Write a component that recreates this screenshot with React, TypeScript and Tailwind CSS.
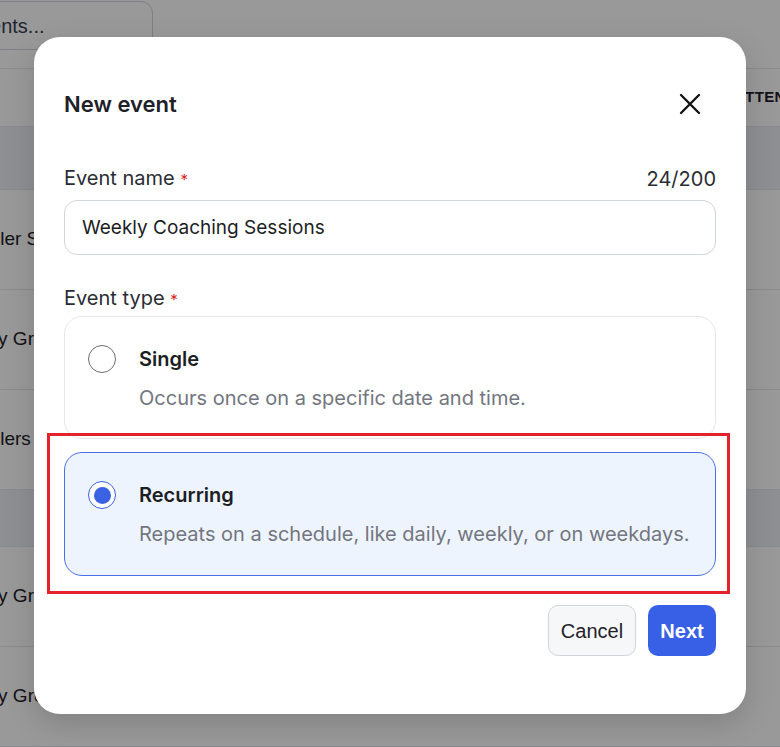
import { useState } from "react";

const rows = [
  { kind: "band", name: "", n: "" },
  { kind: "row", name: "Toddler Swim", n: "" },
  { kind: "row", name: "Study Group", n: "" },
  { kind: "row", name: "Toddlers", n: "" },
  { kind: "band", name: "", n: "" },
  { kind: "row", name: "Study Group", n: "" },
  { kind: "row", name: "Study Group", n: "667" },
];

function Background() {
  return (
    <div className="min-h-screen overflow-hidden bg-white font-['Liberation_Sans',Arial,sans-serif] text-[#1f2128]">
      <div className="pt-[1px]">
        <div className="-ml-[120px] flex h-[49px] w-[273px] items-center rounded-xl border border-gray-300 pl-[19px] text-[20px] text-gray-700">
          Search events...
        </div>
      </div>
      <div className="mt-[18px] border-t border-gray-200">
        <div className="flex h-[58px] items-center border-b border-gray-200 bg-white pl-[735px]">
          <span className="whitespace-nowrap text-[15px] font-bold uppercase tracking-wide">Attendance</span>
        </div>
        {rows.map((r, i) =>
          r.kind === "band" ? (
            <div
              key={i}
              className={`border-b border-gray-200 bg-[#eceef3] ${i === 0 ? "h-[63px]" : "h-[57px]"}`}
            />
          ) : (
            <div key={i} className="flex h-[100px] items-center border-b border-gray-200">
              <span className="-ml-[41px] w-[300px] shrink-0 whitespace-nowrap text-[19px]">{r.name}</span>
              <span className="ml-[82px] text-[20px]">{r.n}</span>
            </div>
          )
        )}
      </div>
    </div>
  );
}

function Radio({ checked }: { checked: boolean }) {
  return (
    <span
      className={`flex h-[28px] w-[28px] shrink-0 items-center justify-center rounded-full border-[1.5px] ${
        checked ? "border-[#3a62e3] bg-white" : "border-[#6b6e75] bg-white"
      }`}
    >
      {checked && <span className="h-[17px] w-[17px] rounded-full bg-[#3a62e3]" />}
    </span>
  );
}

function TypeOption({
  title,
  description,
  checked,
  onSelect,
}: {
  title: string;
  description: string;
  checked: boolean;
  onSelect: () => void;
}) {
  return (
    <button
      type="button"
      onClick={onSelect}
      className={`flex w-full items-start gap-[23px] rounded-[18px] border pl-[23px] pr-6 pt-[28px] text-left ${
        checked ? "border-[#4a6fe6] bg-[#eef4fe] pb-[27px]" : "border-gray-200 bg-white pb-[26px]"
      }`}
    >
      <span className="flex h-[28px] items-center">
        <Radio checked={checked} />
      </span>
      <span className="flex flex-col">
        <span className="text-[20px] font-semibold leading-[28px] text-[#1c1e24]">{title}</span>
        <span className="mt-[11px] text-[20px] leading-[28px] text-[#737680]">{description}</span>
      </span>
    </button>
  );
}

export default function App() {
  const [name, setName] = useState("Weekly Coaching Sessions");
  const [type, setType] = useState<"single" | "recurring">("recurring");

  return (
    <div className="relative h-[747px] w-[780px] overflow-hidden">
      <Background />
      <div className="absolute inset-0 bg-black/40" />

      <div className="absolute left-[34px] top-[37px] w-[712px] rounded-[26px] bg-white px-[30px] pb-[58px] pt-[47px] font-['Inter',sans-serif] shadow-[0_10px_30px_rgba(0,0,0,0.15)]">
        <div className="flex h-10 items-center justify-between">
          <h2 className="text-[22px] font-semibold text-[#1f2128]">New event</h2>
          <button type="button" className="mr-[6px] flex h-10 w-10 items-center justify-center" aria-label="Close">
            <svg width="22" height="22" viewBox="0 0 22 22" fill="none" stroke="#111" strokeWidth="2.3" strokeLinecap="round">
              <path d="M2 2 20 20M20 2 2 20" />
            </svg>
          </button>
        </div>

        <div className="mt-[43px] flex h-6 items-center justify-between text-[20px] leading-6 text-[#2a2d34]">
          <label>
            Event name <span className="text-[15px] text-[#e02424]">*</span>
          </label>
          <span>{name.length}/200</span>
        </div>
        <input
          value={name}
          onChange={(e) => setName(e.target.value.slice(0, 200))}
          className="mt-[9px] h-[55px] w-full rounded-[13px] border border-gray-300 px-[17px] text-[19px] text-[#1c1e24] outline-none"
        />

        <div className="mt-[31px] h-6 text-[20px] leading-6 text-[#2a2d34]">
          Event type <span className="text-[15px] text-[#e02424]">*</span>
        </div>

        <div className="mt-[6px] flex flex-col gap-[13px]">
          <TypeOption
            title="Single"
            description="Occurs once on a specific date and time."
            checked={type === "single"}
            onSelect={() => setType("single")}
          />
          <div className="relative">
            <TypeOption
              title="Recurring"
              description="Repeats on a schedule, like daily, weekly, or on weekdays."
              checked={type === "recurring"}
              onSelect={() => setType("recurring")}
            />
            <div className="pointer-events-none absolute -bottom-[18px] -left-[17px] -right-[14px] -top-[19px] border-[3px] border-[#e3232a]" />
          </div>
        </div>

        <div className="mt-[29px] flex justify-end gap-3 font-['Liberation_Sans',Arial,sans-serif] text-[20px]">
          <button
            type="button"
            className="h-[51px] w-[88px] rounded-[10px] border border-gray-300 bg-[#f6f7f9] text-[#1f2128]"
          >
            Cancel
          </button>
          <button type="button" className="h-[51px] w-[68px] rounded-[10px] bg-[#3760e6] font-bold text-white">
            Next
          </button>
        </div>
      </div>
    </div>
  );
}
